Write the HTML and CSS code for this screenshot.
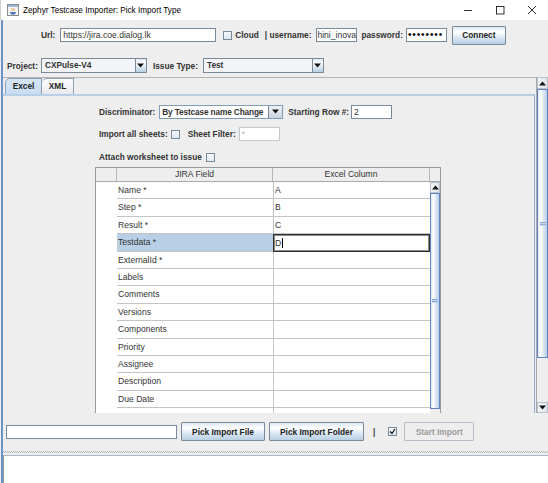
FILE: index.html
```html
<!DOCTYPE html>
<html lang="en">
<head>
    <meta charset="UTF-8">
    <title>Zephyr Testcase Importer: Pick Import Type</title>
    <link rel="stylesheet" href="styles.css">
</head>
<body>
    <div class="titlebar">
        <svg class="app-icon" width="12" height="12" viewBox="0 0 12 12">
            <rect x="0.5" y="0.5" width="11" height="11" fill="#f6f6f6" stroke="#8c8c8c"/>
            <rect x="1" y="1" width="10" height="2" fill="#9fb8d8"/>
            <path d="M5 4c-1 1 1 1.5 0 3M7 4c-1 1 1 1.5 0 3" fill="none" stroke="#d9822b" stroke-width="0.8"/>
            <path d="M3 8h6l-1 2.5h-4z" fill="#4d74b2"/>
        </svg>
        <span class="title">Zephyr Testcase Importer: Pick Import Type</span>
        <div class="winbtns">
            <span class="winbtn"><svg width="10" height="10" viewBox="0 0 10 10"><path d="M1 5.5h8" stroke="#000" stroke-width="0.8"/></svg></span>
            <span class="winbtn"><svg width="10" height="10" viewBox="0 0 10 10"><rect x="1.5" y="1.5" width="7.5" height="7.5" fill="none" stroke="#000" stroke-width="0.8"/></svg></span>
            <span class="winbtn"><svg width="10" height="10" viewBox="0 0 10 10"><path d="M1 1l8 8M9 1l-8 8" stroke="#000" stroke-width="0.8"/></svg></span>
        </div>
    </div>

    <div class="frame">
        <div class="connrow">
            <span class="lbl">Url:</span>
            <div class="tf url">https://jira.coe.dialog.lk</div>
            <span class="cb cloud-cb"></span>
            <span class="lbl cloud">Cloud</span>
            <span class="lbl user">| username:</span>
            <div class="tf short scrolled">hini_inova</div>
            <span class="lbl pass">password:</span>
            <div class="tf short pw">••••••••</div>
            <button class="btn connect">Connect</button>
        </div>

        <div class="projrow">
            <span class="lbl">Project:</span>
            <div class="combo project">
                <span class="combo-text">CXPulse-V4</span>
                <span class="combo-btn"><svg width="7" height="5" viewBox="0 0 7 5"><path d="M0 0.5h7L3.5 4.5z" fill="#111"/></svg></span>
            </div>
            <span class="lbl issue">Issue Type:</span>
            <div class="combo issuetype">
                <span class="combo-text">Test</span>
                <span class="combo-btn"><svg width="7" height="5" viewBox="0 0 7 5"><path d="M0 0.5h7L3.5 4.5z" fill="#111"/></svg></span>
            </div>
        </div>

        <div class="outer">
            <div class="viewport">
                <div class="tabs">
                    <span class="tab active">Excel</span>
                    <span class="tab">XML</span>
                </div>
                <div class="tabpanel">
                    <div class="frow row1">
                        <span class="lbl">Discriminator:</span>
                        <div class="combo disc">
                            <span class="combo-text">By Testcase name Change</span>
                            <span class="combo-btn"><svg width="7" height="5" viewBox="0 0 7 5"><path d="M0 0.5h7L3.5 4.5z" fill="#111"/></svg></span>
                        </div>
                        <span class="lbl startrow">Starting Row #:</span>
                        <div class="tf short">2</div>
                    </div>
                    <div class="frow row2">
                        <span class="lbl">Import all sheets:</span>
                        <span class="cb sheets-cb"></span>
                        <span class="lbl filter">Sheet Filter:</span>
                        <div class="tf short disabled">*</div>
                    </div>
                    <div class="frow row3">
                        <span class="lbl">Attach worksheet to issue</span>
                        <span class="cb attach-cb"></span>
                    </div>

                    <div class="grid">
                        <div class="ghead">
                            <div class="hc hc-corner"></div>
                            <div class="hc hc-field">JIRA Field</div>
                            <div class="hc hc-col">Excel Column</div>
                            <div class="hc hc-end"></div>
                        </div>
                        <div class="gbody">
                            <div class="rowhead"></div>
                            <div class="rows">
                                <div class="grow"><div class="c1">Name *</div><div class="c2">A</div></div>
                                <div class="grow"><div class="c1">Step *</div><div class="c2">B</div></div>
                                <div class="grow"><div class="c1">Result *</div><div class="c2">C</div></div>
                                <div class="grow sel"><div class="c1">Testdata *</div><div class="c2 editing">D<span class="caret"></span></div></div>
                                <div class="grow"><div class="c1">ExternalId *</div><div class="c2"></div></div>
                                <div class="grow"><div class="c1">Labels</div><div class="c2"></div></div>
                                <div class="grow"><div class="c1">Comments</div><div class="c2"></div></div>
                                <div class="grow"><div class="c1">Versions</div><div class="c2"></div></div>
                                <div class="grow"><div class="c1">Components</div><div class="c2"></div></div>
                                <div class="grow"><div class="c1">Priority</div><div class="c2"></div></div>
                                <div class="grow"><div class="c1">Assignee</div><div class="c2"></div></div>
                                <div class="grow"><div class="c1">Description</div><div class="c2"></div></div>
                                <div class="grow"><div class="c1">Due Date</div><div class="c2"></div></div>
                                <div class="grow"><div class="c1"></div><div class="c2"></div></div>
                            </div>
                            <div class="sbar tsb">
                                <span class="sb-btn"><svg width="7" height="5" viewBox="0 0 7 5"><path d="M0 4.5h7L3.5 0.5z" fill="#111"/></svg></span>
                                <span class="sb-thumb tthumb"><span class="grip"></span></span>
                                <span class="sb-track"></span>
                            </div>
                        </div>
                    </div>
                </div>
            </div>
            <div class="sbar vsb">
                <span class="sb-btn"><svg width="7" height="5" viewBox="0 0 7 5"><path d="M0 4.5h7L3.5 0.5z" fill="#111"/></svg></span>
                <span class="sb-thumb othumb"><span class="grip"></span></span>
                <span class="sb-track"></span>
                <span class="sb-btn down"><svg width="7" height="5" viewBox="0 0 7 5"><path d="M0 0.5h7L3.5 4.5z" fill="#111"/></svg></span>
            </div>
        </div>

        <div class="botrow">
            <div class="tf file"></div>
            <button class="btn pickfile">Pick Import File</button>
            <button class="btn pickfolder">Pick Import Folder</button>
            <span class="lbl bar">|</span>
            <span class="cb checked start-cb"><svg width="7" height="7" viewBox="0 0 7 7"><path d="M1 3.5l2 2 3-4.5" fill="none" stroke="#111" stroke-width="1.2"/></svg></span>
            <button class="btn startimport" disabled>Start Import</button>
        </div>

        <div class="divider"></div>
        <div class="log"></div>
    </div>
</body>
</html>
```

FILE: styles.css
```css
* {
    margin: 0;
    padding: 0;
    box-sizing: border-box;
}

body {
    width: 548px;
    height: 483px;
    overflow: hidden;
    background: #eeeeee;
    font-family: "Liberation Sans", Arial, sans-serif;
    font-size: 8.6px;
    color: #333;
}

/* window title */
.titlebar {
    height: 20px;
    background: #fff;
    display: flex;
    align-items: center;
    border-left: 1px solid #cfcfcf;
}

.app-icon {
    margin-left: 6px;
}

.title {
    margin-left: 4px;
    font-size: 8.2px;
    color: #000;
}

.winbtns {
    margin-left: auto;
    display: flex;
}

.winbtn {
    width: 32px;
    height: 20px;
    display: flex;
    align-items: center;
    justify-content: center;
}

.frame {
    height: 463px;
    margin-left: 1px;
    border-left: 2px solid #6c92c8;
    display: flex;
    flex-direction: column;
}

/* common widgets */
.lbl {
    font-weight: bold;
    font-size: 8.3px;
    color: #333;
    white-space: nowrap;
}

.tf {
    height: 14px;
    border: 1px solid #7a8a99;
    background: #fff;
    padding-left: 2px;
    line-height: 12px;
    white-space: nowrap;
    overflow: hidden;
    color: #333;
}

.tf.short {
    width: 41px;
}

.tf.scrolled {
    text-align: right;
    padding: 0 1px 0 0;
}

.tf.disabled {
    border-color: #c4c9cf;
    color: #b0b0b0;
}

.cb {
    width: 9px;
    height: 9px;
    border: 1px solid #7a8a99;
    background: linear-gradient(#f4f8fb, #dde8f3);
    display: flex;
    align-items: center;
    justify-content: center;
}

.btn {
    height: 19px;
    border: 1px solid #7a8a99;
    border-radius: 1px;
    background: linear-gradient(#dde8f3 0%, #fff 30%, #dde8f3 60%, #b8cfe5 100%);
    font-family: inherit;
    font-weight: bold;
    font-size: 8.3px;
    color: #222;
}

.btn:disabled {
    border-color: #b5bec8;
    background: #eeeeee;
    color: #9a9a9a;
}

.combo {
    height: 15px;
    display: flex;
    border: 1px solid #7a8a99;
    background: #f2f4f7;
}

.combo-text {
    flex: 1;
    padding-left: 3px;
    font-weight: bold;
    font-size: 8.3px;
    line-height: 13px;
    white-space: nowrap;
    overflow: hidden;
}

.combo-btn {
    width: 11px;
    border-left: 1px solid #7a8a99;
    background: linear-gradient(#dde8f3 0%, #fff 30%, #dde8f3 60%, #b8cfe5 100%);
    display: flex;
    align-items: center;
    justify-content: center;
}

/* connection row */
.connrow {
    height: 30px;
    display: flex;
    align-items: center;
    padding-left: 38px;
}

.tf.url {
    width: 156px;
    margin-left: 5px;
}

.cloud-cb { margin-left: 7px; }
.cloud { margin-left: 3px; }
.user { margin-left: 6px; }
.connrow .tf.short { margin-left: 5px; }
.pass { margin-left: 4px; }
.connrow .tf.pw {
    margin-left: 3px;
    font-size: 10px;
    color: #000;
    padding-left: 1px;
    letter-spacing: 0.9px;
}

.connect {
    width: 54px;
    margin-left: 5px;
}

/* project row */
.projrow {
    height: 19px;
    margin: 6px 0 2px;
    display: flex;
    align-items: center;
    padding-left: 4px;
}

.project {
    width: 106px;
    margin-left: 3px;
}

.issue { margin-left: 6px; }

.issuetype {
    width: 121px;
    margin-left: 5px;
}

/* scroll pane */
.outer {
    height: 336px;
    display: flex;
}

.viewport {
    flex: 1;
    overflow: hidden;
    border-top: 1px solid #b4b4b4;
}

.tabs {
    height: 16px;
    display: flex;
    padding-left: 2px;
}

.tab {
    height: 16px;
    border: 1px solid #8da2b8;
    border-bottom: none;
    border-top-left-radius: 5px;
    background: linear-gradient(#fdfdfd, #e6e9ee);
    font-weight: bold;
    font-size: 8.3px;
    line-height: 15px;
    text-align: center;
    color: #222;
}

.tab.active {
    width: 37px;
    background: linear-gradient(#d6e5f5, #c8ddf2);
}

.tab + .tab {
    width: 32px;
    border-left: none;
}

.tabpanel {
    height: 319px;
    margin-right: 1px;
    border-top: 2px solid #b8cfe5;
    border-right: 1px solid #8fabd0;
    overflow: hidden;
}

.frow {
    display: flex;
    align-items: center;
    padding-left: 96px;
}

.row1 {
    height: 15px;
    margin-top: 8px;
}

.disc {
    width: 124px;
    height: 14px;
    margin-left: 4px;
    background: #fff;
    border-color: #7f9db9;
}

.disc .combo-text {
    line-height: 12px;
    padding-left: 2px;
    letter-spacing: -0.15px;
}

.disc .combo-btn {
    width: 14px;
    background: linear-gradient(#eef2f6, #c9d3dd);
}

.startrow { margin-left: 5px; }
.row1 .tf { margin-left: 2px; }

.row2 {
    height: 14px;
    margin-top: 8px;
}

.sheets-cb { margin-left: 3px; }
.filter { margin-left: 8px; }
.row2 .tf { margin-left: 3px; }

.row3 {
    height: 14px;
    margin-top: 9px;
}

.attach-cb { margin-left: 4px; }

/* mapping table */
.grid {
    width: 346px;
    margin: 3px 0 0 92px;
    border: 1px solid #9a9a9a;
    border-bottom: none;
}

.ghead {
    height: 14px;
    display: flex;
    border-bottom: 1px solid #a8a8a8;
    background: #eeeeee;
}

.hc {
    height: 13px;
    line-height: 13px;
    text-align: center;
    border-right: 1px solid #b8b8b8;
    color: #333;
}

.hc-corner { width: 21px; }
.hc-field { width: 156px; }
.hc-col { width: 157px; }
.hc-end {
    width: 10px;
    border-right: none;
}

.gbody {
    display: flex;
    height: 260px;
}

.rowhead {
    width: 21px;
    background: #fff;
}

.rows {
    width: 313px;
    background: #fff;
}

.grow {
    height: 17.4px;
    display: flex;
}

.c1,
.c2 {
    height: 100%;
    border-bottom: 1px solid #c4c4c4;
    padding-left: 1px;
    line-height: 16px;
    white-space: nowrap;
}

.c1 { width: 156px; }

.c2 {
    width: 157px;
    border-left: 1px solid #c4c4c4;
}

.sel .c1 {
    background: #b8cfe5;
}

.c2.editing {
    border: 1px solid #2e2e2e;
    box-shadow: inset 0 0 0 1px #8a8a8a;
    display: flex;
    align-items: center;
    line-height: 14px;
}

.caret {
    width: 1px;
    height: 10px;
    background: #000;
    margin-left: 0.5px;
}

/* scrollbars */
.sbar {
    display: flex;
    flex-direction: column;
    background: #eeeeee;
}

.vsb {
    width: 12px;
    border-left: 1px solid #a8a8a8;
}

.tsb {
    width: 10px;
}

.sb-btn {
    height: 12px;
    flex: none;
    border: 1px solid #b9c2cb;
    background: linear-gradient(90deg, #f4f6f8, #dfe4ea);
    display: flex;
    align-items: center;
    justify-content: center;
}

.tsb .sb-btn {
    height: 11px;
}

.sb-btn.down {
    height: 11px;
}

.sb-thumb {
    flex: none;
    border: 1px solid #6382bf;
    background: linear-gradient(90deg, #dde8f3 0%, #fff 30%, #dde8f3 60%, #b8cfe5 100%);
    display: flex;
    align-items: center;
    justify-content: center;
}

.othumb { height: 269px; }
.tthumb { height: 216px; }

.grip {
    width: 6px;
    height: 4px;
    background: repeating-linear-gradient(#8ea9d8 0 1px, #c9d8ee 1px 2px);
}

.sb-track {
    flex: 1;
}

/* bottom row */
.botrow {
    height: 37px;
    display: flex;
    align-items: center;
    padding-left: 3px;
}

.tf.file {
    width: 171px;
}

.pickfile {
    width: 84px;
    margin-left: 4px;
}

.pickfolder {
    width: 95px;
    margin-left: 4px;
}

.bar { margin-left: 9px; }
.start-cb { margin-left: 13px; }

.startimport {
    width: 70px;
    margin-left: 7px;
}

.divider {
    height: 5px;
    background-image:
        linear-gradient(90deg, #b4b4b4 50%, transparent 50%),
        linear-gradient(90deg, transparent 50%, #b4b4b4 50%);
    background-size: 2px 1px, 2px 1px;
    background-repeat: repeat-x, repeat-x;
    background-position: 0 1px, 0 2px;
}

.log {
    flex: 1;
    background: #fff;
    border-top: 1px solid #a9b6c6;
    border-left: 1px solid #9a9a9a;
}
```
